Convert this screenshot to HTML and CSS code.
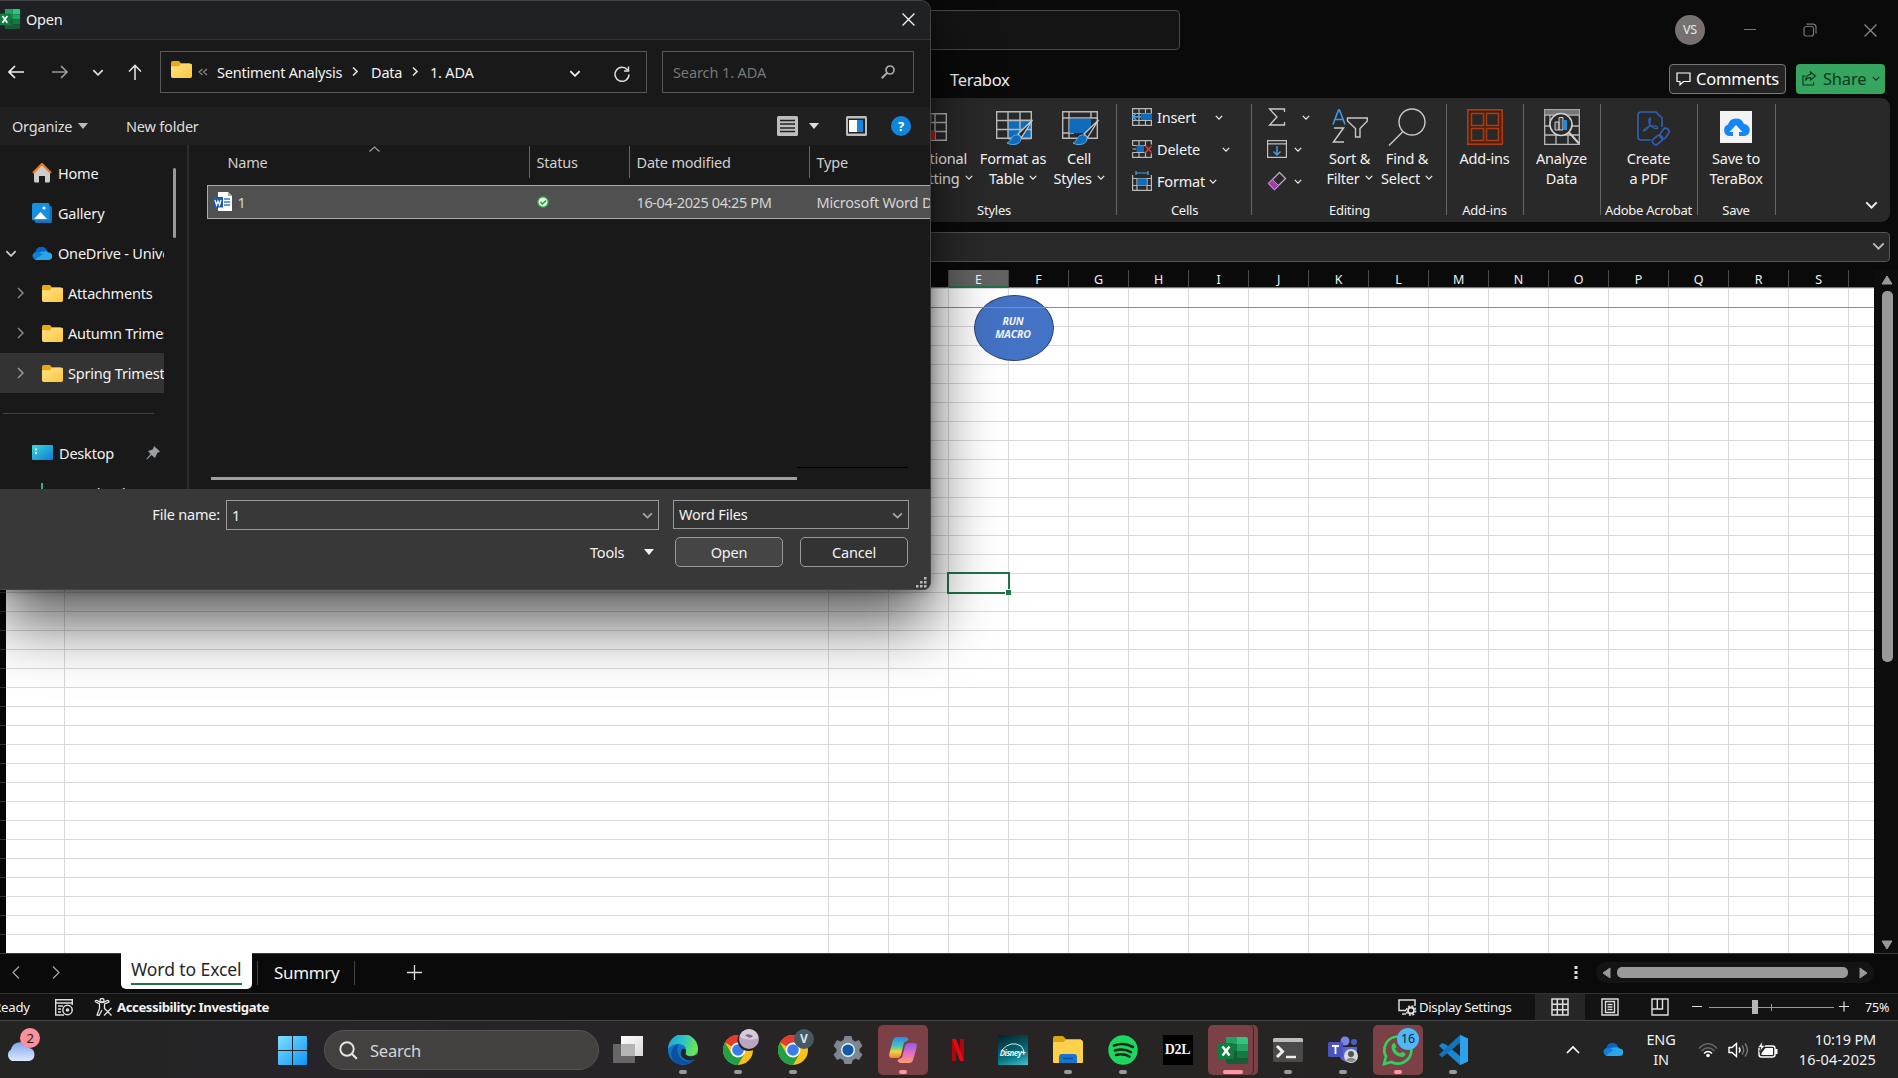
FILE: index.html
```html
<!DOCTYPE html>
<html lang="en">
<head>
<meta charset="utf-8">
<title>Excel - Open</title>
<link rel="stylesheet" href="styles.css">
</head>
<body>
<svg width="0" height="0" class="defs">
  <defs>
    <linearGradient id="gFolder" x1="0" y1="0" x2="1" y2="1"><stop offset="0" stop-color="#ffe08a"/><stop offset="1" stop-color="#ffc83a"/></linearGradient>
    <linearGradient id="gWin" x1="0" y1="0" x2="1" y2="1"><stop offset="0" stop-color="#7fe0ff"/><stop offset="1" stop-color="#0c95f5"/></linearGradient>
    <linearGradient id="gEdge" x1="0" y1="0" x2="1" y2="0.3"><stop offset="0" stop-color="#1c9fe0"/><stop offset=".55" stop-color="#2cc4c9"/><stop offset="1" stop-color="#6be554"/></linearGradient>
    <linearGradient id="gCloud" x1="0" y1="0" x2="0" y2="1"><stop offset="0" stop-color="#7ea6ee"/><stop offset="1" stop-color="#dde8fb"/></linearGradient>
    <linearGradient id="gCopA" x1="0" y1="0" x2="0" y2="1"><stop offset="0" stop-color="#2d86f0"/><stop offset=".45" stop-color="#4bc6b0"/><stop offset=".7" stop-color="#f3d33c"/><stop offset="1" stop-color="#f77f35"/></linearGradient>
    <linearGradient id="gCopB" x1="0" y1="0" x2="0" y2="1"><stop offset="0" stop-color="#8a5bea"/><stop offset=".5" stop-color="#e76cc6"/><stop offset="1" stop-color="#ff9c70"/></linearGradient>
    <linearGradient id="gDesk" x1="0" y1="0" x2="1" y2="1"><stop offset="0" stop-color="#35dbe0"/><stop offset="1" stop-color="#1277d4"/></linearGradient>
    <linearGradient id="gView" x1="0" y1="0" x2="1" y2="1"><stop offset="0" stop-color="#fff"/><stop offset="1" stop-color="#d8d8d8"/></linearGradient>

    <symbol id="chev" viewBox="0 0 10 6"><path d="M1 1l4 4 4-4" fill="none" stroke="currentColor" stroke-width="1.5"/></symbol>
    <symbol id="tri" viewBox="0 0 10 6"><path d="M0 0h10L5 6z" fill="currentColor"/></symbol>
    <symbol id="close" viewBox="0 0 12 12"><path d="M.5.5l11 11M11.500.5l-11 11" fill="none" stroke="currentColor" stroke-width="1.2"/></symbol>
    <symbol id="folder" viewBox="0 0 20 16"><path d="M0 1.500Q0 0 1.500 0h6L9.500 2H18v6H0z" fill="#e9a912"/><path d="M0 5h7.500L9.500 2.600H19Q20 2.600 20 3.800V14.500Q20 16 18.500 16h-17Q0 16 0 14.500z" fill="url(#gFolder)"/></symbol>
    <symbol id="excel" viewBox="0 0 30 27"><path d="M8 0h11v27H10Q8 27 8 25z" fill="#21a366"/><path d="M19 0h9q2 0 2 2v5H19z" fill="#33c481"/><path d="M8 7h11v7H8z" fill="#107c41"/><path d="M19 7h11v7H19z" fill="#21a366"/><path d="M8 14h11v7H8z" fill="#185c37"/><path d="M19 14h11v7H19z" fill="#107c41"/><path d="M8 21h22v4q0 2-2 2H10q-2 0-2-2z" fill="#185c37"/><rect x="0" y="6" width="16" height="16" rx="1.500" fill="#107c41"/><path d="M4.500 9.500l7 9M11.500 9.500l-7 9" stroke="#fff" stroke-width="2.500"/></symbol>
    <symbol id="cloud" viewBox="0 0 20 13"><path d="M4 12.500A4 4 0 013.500 5 6 6 0 0115 3.500L17 9 8 12.800z" fill="#0a64c8"/><path d="M2 11.500Q6 4 11 4.500q4-1 5.500 1A3.700 3.700 0 0116.500 13H5Q3 13 2 11.500z" fill="#28a8ea"/><path d="M.8 10A3.700 3.700 0 014 5q3-.5 6.500 2.300L3 12.500Q1.200 11.700.8 10z" fill="#0f80d8"/></symbol>
    <symbol id="sheet" viewBox="0 0 36 28"><path d="M.7.700h34.600v26.600H.7zM.7 9.500h34.600M.7 18.500h34.600M12 .7v26.600M24 .7v26.600" fill="none" stroke="#b9b9b9" stroke-width="1.400"/></symbol>
    <symbol id="brush" viewBox="0 0 28 26"><path d="M26.500 1L12 15l3.500 3.500z" fill="#292929" stroke="#c8c8c8" stroke-width="1.300"/><path d="M1 24q3-1 4-4 2-4.500 6.500-4 4 1 3.500 4.500Q14 25 8 25.500 4 26 1 24z" fill="#0f6cbd" stroke="#5aa9e6" stroke-width="1"/></symbol>
    <symbol id="chrome" viewBox="0 0 30 30"><circle cx="15" cy="15" r="15" fill="#fbc116"/><path d="M15 15L2 7.500A15 15 0 0128 7.500H15z" fill="#e33b2e"/><path d="M2 7.500A15 15 0 0015 30l6.500-11.200L15 15l-6.500 3.700z" fill="#21a047"/><circle cx="15" cy="15" r="7.400" fill="#fff"/><circle cx="15" cy="15" r="5.800" fill="#3b7ded"/></symbol>
  </defs>
</svg>

<div class="screen">
  <header class="titlebar">
    <div class="app-search"></div>
    <div class="window-tools">
      <span class="avatar">VS</span>
      <svg width="12" height="12" viewBox="0 0 12 12"><path d="M0 5.500h12" stroke="#777"/></svg>
      <svg width="14" height="14" viewBox="0 0 14 14"><g fill="none" stroke="#777" stroke-width="1.200"><rect x="1" y="3.500" width="9.500" height="9.500" rx="2"/><path d="M3.500 1.200H10q3 0 3 3V10.500"/></g></svg>
      <svg width="13" height="13" class="dim"><use href="#close"/></svg>
    </div>
  </header>

  <div class="tabs">
    <span class="tab">Terabox</span>
    <div class="tab-actions">
      <button class="comments"><svg width="15" height="14" viewBox="0 0 15 14"><path d="M1 1h13v8.500H7.500L4 12.800V9.500H1z" fill="none" stroke="#fff" stroke-width="1.200"/></svg>Comments</button>
      <button class="share"><svg width="15" height="15" viewBox="0 0 15 15"><path d="M3.500 5H1v9h10.500v-3M8.500 1l5 4-5 4V6.500Q5 6.500 3.500 9.500 4 4 8.500 3.500z" fill="none" stroke="#0b3a1d" stroke-width="1.200"/></svg>Share<svg width="8" height="5"><use href="#chev"/></svg></button>
    </div>
  </div>

  <section class="ribbon">
    <div class="group styles">
      <div class="tools">
        <div class="big w84"><svg width="36" height="36" viewBox="0 0 36 36"><use href="#sheet" y="4" width="36" height="28"/><path d="M12 5h9v8h-9zM12 22h12v9H12z" fill="#c4201d"/></svg><span>Conditional</span><span>Formatting <svg width="8" height="5"><use href="#chev"/></svg></span></div>
        <div class="big w84"><svg class="nudge" width="38" height="36" viewBox="0 0 38 36"><path d="M12 10h23v21H12z" fill="#0f6cbd"/><use href="#sheet" y="2" width="36" height="28"/><use href="#brush" x="10" y="10" width="28" height="26"/></svg><span>Format as</span><span>Table <svg width="8" height="5"><use href="#chev"/></svg></span></div>
        <div class="big w48"><svg class="nudge" width="38" height="36" viewBox="0 0 38 36"><path d="M.7 2.700h34.600v26.600H.7zM.7 9h34.600M7 2.700v26.600M29 2.700V9M.7 24H12" fill="none" stroke="#b9b9b9" stroke-width="1.400"/><path d="M7.700 9.700H29V24H7.700z" fill="#0f6cbd"/><use href="#brush" x="10" y="10" width="28" height="26"/></svg><span>Cell</span><span>Styles <svg width="8" height="5"><use href="#chev"/></svg></span></div>
      </div>
      <div class="label">Styles</div>
    </div>
    <div class="group cells">
      <div class="small-tools">
        <div class="small"><svg width="20" height="18" viewBox="0 0 20 18"><path d="M.6.600h18.800v16.800H.6zM.6 5.500h18.800M.6 12.500h18.800M7 .6v16.800M13.500.6v16.800" fill="none" stroke="#b9b9b9" stroke-width="1.200"/><path d="M9 5.500h11v6.500H9z" fill="#0f6cbd"/><path d="M9 8.800H1M4.500 5L.8 8.800l3.700 3.700" fill="none" stroke="#4aa3e8" stroke-width="1.500"/></svg><span>Insert</span><svg class="c1" width="8" height="5"><use href="#chev"/></svg></div>
        <div class="small"><svg width="20" height="18" viewBox="0 0 20 18"><path d="M.6 5.500V.6h18.800v4M.6 5.500h13M.6 12.500v4.900h18.800v-4M.6 12.500h12M7 .6v4.900M13.500.6v4.900M7 12.500v4.900M13.500 12.500v4.900M.6 9H4" fill="none" stroke="#b9b9b9" stroke-width="1.200"/><path d="M4.500 5.500h7.500v6.500H4.500z" fill="#0f6cbd"/><path d="M13.500 6l6 6.500M19.500 6l-6 6.500" stroke="#e0403a" stroke-width="1.500"/></svg><span>Delete</span><svg class="c2" width="8" height="5"><use href="#chev"/></svg></div>
        <div class="small"><svg width="20" height="20" viewBox="0 0 20 20"><path d="M.6 4v15.400h18.800V4M.6 7.500h18.800M.6 14.500h18.800M5 7v12.400M15 7v12.400" fill="none" stroke="#b9b9b9" stroke-width="1.200"/><path d="M5.500 7.500h9v7h-9z" fill="#0f6cbd"/><path d="M4 2h12M4 0v4M16 0v4" fill="none" stroke="#4aa3e8" stroke-width="1.200"/></svg><span>Format</span><svg class="c3" width="8" height="5"><use href="#chev"/></svg></div>
      </div>
      <div class="label">Cells</div>
    </div>
    <div class="group editing">
      <div class="tools">
        <div class="small-tools">
          <div class="small"><svg width="20" height="18" viewBox="0 0 20 18"><path d="M17.500 4V1H2.500L10 9l-7.500 8h15v-3" fill="none" stroke="#ccc" stroke-width="1.300"/></svg><svg class="s1" width="8" height="5"><use href="#chev"/></svg></div>
          <div class="small"><svg width="20" height="18" viewBox="0 0 20 18"><path d="M.6.600h18.800v16.800H.6zM.6 3.800h18.800" fill="none" stroke="#c0c0c0" stroke-width="1.200"/><path d="M10 6v9M6.500 11.500L10 15l3.500-3.500" fill="none" stroke="#4aa3e8" stroke-width="1.400"/></svg><svg class="s2" width="8" height="5"><use href="#chev"/></svg></div>
          <div class="small"><svg width="20" height="20" viewBox="0 0 20 20"><path d="M12.500 1.500l6 6L7.500 18.500l-6-6z" fill="none" stroke="#c9a0cf" stroke-width="1.300"/><path d="M5.500 8.500l6 6-4 4-6-6z" fill="#a23bab" stroke="#d583dd"/></svg><svg class="s2" width="8" height="5"><use href="#chev"/></svg></div>
        </div>
        <div class="big w59"><svg width="36" height="36" viewBox="0 0 36 36"><path d="M1 15.500L6.500 1h1L13 15.500M3 10.500h8" fill="none" stroke="#3f9be6" stroke-width="1.600"/><path d="M2 19h9.500L1.500 33H12" fill="none" stroke="#c8c8c8" stroke-width="1.500"/><path d="M15.500 9h19.800v3L28 19.500V28h-4.500v-8.500L15.500 12z" fill="none" stroke="#c8c8c8" stroke-width="1.400"/></svg><span>Sort &amp;</span><span>Filter <svg width="8" height="5"><use href="#chev"/></svg></span></div>
        <div class="big w56"><svg width="38" height="38" viewBox="0 0 38 38"><circle cx="24" cy="14" r="13" fill="none" stroke="#c8c8c8" stroke-width="1.400"/><path d="M15 23.500L1 37.500" stroke="#c8c8c8" stroke-width="1.400"/></svg><span>Find &amp;</span><span>Select <svg width="8" height="5"><use href="#chev"/></svg></span></div>
      </div>
      <div class="label">Editing</div>
    </div>
    <div class="group one w77">
      <div class="big"><svg width="36" height="36" viewBox="0 0 36 36"><rect x=".8" y=".8" width="34.400" height="34.400" fill="#47200f" stroke="#b03a12" stroke-width="1.600"/><g fill="#292929" stroke="#b03a12" stroke-width="1.500"><path d="M4.500 4.500h12v12h-12zM19.500 4.500h12v12h-12zM4.500 19.500h12v12h-12zM19.500 19.500h12v12h-12z"/></g></svg><span>Add-ins</span></div>
      <div class="label">Add-ins</div>
    </div>
    <div class="group one w77">
      <div class="big"><svg width="36" height="36" viewBox="0 0 36 36"><path d="M.7.700h34.600v34.600H.7zM.7 6h34.600M.7 17h34.600M.7 26h34.600M12 17v18M24 17v18M6 6v11" fill="none" stroke="#b9b9b9" stroke-width="1.300"/><path d="M.7.700h34.600V5H.7z" fill="#777"/><circle cx="17" cy="15.500" r="11" fill="#292929" stroke="#d0d0d0" stroke-width="1.600"/><path d="M25 23.500l10 11" stroke="#d0d0d0" stroke-width="2"/><path d="M11 13h4v8h-4zM15 8.500h4V21h-4z" fill="#444" stroke="#ccc"/><path d="M19 11h4v10h-4z" fill="#1e8ae0"/></svg><span>Analyze</span><span>Data</span></div>
      <div class="label"></div>
    </div>
    <div class="group one w97">
      <div class="big"><svg class="pdf" width="36" height="38" viewBox="0 0 36 38"><g fill="none" stroke="#2f62b8" stroke-width="1.600"><path d="M17 32H7q-3 0-3-3V7q0-3 3-3h15l6 6v9"/><path d="M9.500 23q7-2 7-13-3 0-1 6 3 5 8 4.500 1-3-6-2.500-7 1-8 5z" stroke-width="1.200"/><rect x="-5.500" y="-3.300" width="11" height="6.600" rx="3.300" transform="translate(30.500 25.500) rotate(-55)"/><rect x="-5.500" y="-3.300" width="11" height="6.600" rx="3.300" transform="translate(23.500 32) rotate(-40)"/></g></svg><span>Create</span><span>a PDF</span></div>
      <div class="label">Adobe Acrobat</div>
    </div>
    <div class="group one w78">
      <div class="big"><svg width="32" height="36" viewBox="0 0 32 36"><path d="M0 2h32v32H0z" fill="#f3f3f3"/><path d="M9 27A6 6 0 018 15.500 8.500 8.500 0 0124 15a6 6 0 01-.5 12H19v-4h3.500L16 16l-6.500 7H13v4z" fill="#1585f7"/></svg><span>Save to</span><span>TeraBox</span></div>
      <div class="label">Save</div>
    </div>
    <svg class="collapse" width="13" height="8"><use href="#chev"/></svg>
  </section>

  <div class="formula"><svg width="13" height="8"><use href="#chev"/></svg></div>

  <main class="workbook">
    <div class="sheet-area">
      <div class="col-heads">
        <span></span><span></span><span></span><span></span><span class="on">E</span><span>F</span><span>G</span><span>H</span><span>I</span><span>J</span><span>K</span><span>L</span><span>M</span><span>N</span><span>O</span><span>P</span><span>Q</span><span>R</span><span>S</span><span></span>
      </div>
      <div class="body-row">
        <div class="row-heads"></div>
        <div class="cells-grid">
          <div class="macro"><span>RUN</span><span>MACRO</span></div>
          <div class="freeze"></div>
          <div class="active-cell"></div>
        </div>
      </div>
    </div>
    <div class="vscroll">
      <svg width="12" height="10" viewBox="0 0 12 10"><path d="M6 1l5 8H1z" fill="#999" stroke="#999" stroke-linejoin="round"/></svg>
      <div class="thumb"></div>
      <svg width="12" height="10" viewBox="0 0 12 10"><path d="M6 9l5-8H1z" fill="#999" stroke="#999" stroke-linejoin="round"/></svg>
    </div>
  </main>

  <div class="sheet-tabs">
    <svg class="prev" width="8" height="13" viewBox="0 0 8 13"><path d="M7 .500l-6 6 6 6" fill="none" stroke="#aaa" stroke-width="1.200"/></svg>
    <svg class="next" width="8" height="13" viewBox="0 0 8 13"><path d="M1 .500l6 6-6 6" fill="none" stroke="#aaa" stroke-width="1.200"/></svg>
    <div class="sheet-active"><span>Word to Excel</span></div>
    <div class="sheet-other">Summry</div>
    <svg class="plus" width="15" height="15" viewBox="0 0 15 15"><path d="M7.500 0v15M0 7.500h15" stroke="#ddd" stroke-width="1.300"/></svg>
    <svg class="dots" width="4" height="14" viewBox="0 0 4 14"><path d="M.5 0h3v3h-3zM.5 5h3v3h-3zM.5 10h3v3h-3z" fill="#ddd"/></svg>
    <div class="hscroll">
      <svg width="9" height="12" viewBox="0 0 9 12"><path d="M8 1v10L1 6z" fill="#999" stroke="#999" stroke-linejoin="round"/></svg>
      <div class="thumb"></div>
      <svg width="9" height="12" viewBox="0 0 9 12"><path d="M1 1v10l7-5z" fill="#999" stroke="#999" stroke-linejoin="round"/></svg>
    </div>
  </div>

  <footer class="status">
    <span class="ready">Ready</span>
    <svg width="18" height="17" viewBox="0 0 18 17"><path d="M9 16H.7V.700h16.600V6M.7 4h16.600M3 7h5M3 10h3M3 13h3" fill="none" stroke="#ddd" stroke-width="1.400"/><circle cx="12.500" cy="11" r="4.700" fill="none" stroke="#ddd" stroke-width="1.500"/><circle cx="12.500" cy="11" r="1.800" fill="#ddd"/></svg>
    <svg class="acc-icon" width="19" height="18" viewBox="0 0 19 18"><g fill="none" stroke="#e5e5e5" stroke-width="1.300"><circle cx="8" cy="2.500" r="2"/><path d="M1 3.500l4.500 2.500v4.500L3 17l2 .5 3-5.500M1 3.500q.5-1.500 2-1l3 1.500h4l3.500-1.500q1.500 0 1.500 1.500L10.500 6v4M10 10l7.500 7.500M17.500 10L10 17.500"/></g></svg>
    <b>Accessibility: Investigate</b>
    <div class="display"><svg width="19" height="17" viewBox="0 0 19 17"><path d="M8 11.500H1V1h16v6M4 15h4" fill="none" stroke="#ddd" stroke-width="1.500"/><circle cx="13" cy="11.500" r="3" fill="none" stroke="#ddd" stroke-width="1.800"/><circle cx="13" cy="11.500" r="4.600" fill="none" stroke="#ddd" stroke-width="1.600" stroke-dasharray="2 1.600"/></svg>Display Settings</div>
    <div class="views">
      <div class="view on"><svg width="18" height="18" viewBox="0 0 18 18"><path d="M1 1h16v16H1zM1 6.300h16M1 11.700h16M6.300 1v16M11.700 1v16" fill="none" stroke="#ddd" stroke-width="1.500"/></svg></div>
      <div class="view"><svg width="18" height="18" viewBox="0 0 18 18"><path d="M1 1h16v16H1zM4.500 3.500h9v11h-9zM6.500 6.500h5M6.500 9h5M6.500 11.500h5" fill="none" stroke="#ddd" stroke-width="1.400"/></svg></div>
      <div class="view"><svg width="18" height="18" viewBox="0 0 18 18"><path d="M1 1h16v16H1zM6.300 1v10M1 11h10.500V1" fill="none" stroke="#ddd" stroke-width="1.400"/></svg></div>
    </div>
    <svg class="zoom" width="158" height="16" viewBox="0 0 158 16"><path d="M1 7.500h10M148 7.500h10M153 2.500v10" stroke="#ddd" stroke-width="1.200"/><path d="M18 8.500h125M80.500 5v7" stroke="#999"/><path d="M61 1h6v14h-6z" fill="#b5b5b5"/></svg>
    <span class="pct">75%</span>
  </footer>

  <footer class="taskbar">
    <div class="weather"><svg width="30" height="22" viewBox="0 0 30 22"><path d="M6 22A6.500 6.500 0 015 10.500 9.500 9.500 0 0123 9a6.600 6.600 0 010 13z" fill="url(#gCloud)"/></svg><span>2</span></div>
    <svg class="start" width="29" height="29" viewBox="0 0 29 29"><path d="M0 1q0-1 1-1h13v14H0zM15 0h13q1 0 1 1v13H15zM0 15h14v14H1q-1 0-1-1zM15 15h14v13q0 1-1 1H15z" fill="url(#gWin)"/></svg>
    <div class="search"><svg width="19" height="19" viewBox="0 0 19 19"><circle cx="8" cy="8" r="6.700" fill="none" stroke="#e5e5e5" stroke-width="1.900"/><path d="M12.800 12.800l5 5" stroke="#e5e5e5" stroke-width="2.200"/></svg>Search</div>
    <nav class="apps">
      <div class="app"><svg width="30" height="30" viewBox="0 0 30 30"><path d="M8 1h22v20H8z" fill="url(#gView)"/><path d="M0 9h22v19H0z" fill="#777" opacity=".8"/><path d="M8 9h14v12H8z" fill="#b4b4b4"/></svg></div>
      <div class="app run"><svg width="30" height="30" viewBox="0 0 30 30"><circle cx="15" cy="15" r="15" fill="#1273c4"/><path d="M0 14A15 15 0 0130 14q0 7-7.500 7-6 0-4.500-4.500Q19 10 11 9 3 9 0 14z" fill="url(#gEdge)"/><path d="M8.500 28.500Q1 23 4 15q2-5 7-6-3 4-1 10t9 7.500q4 .5 8-2Q19 32 8.500 28.500z" fill="#0d4fa0"/><path d="M18 16.500Q16 21 22.500 21.500q4 0 6-2L29 22l-2 2q-6 3.500-12-1-4-4-1-9 4-1 4 2.500z" fill="#28241f"/></svg></div>
      <div class="app run"><svg class="badged" width="38" height="38" viewBox="0 0 38 38"><use href="#chrome" x="4" y="4" width="30" height="30"/><circle cx="29.500" cy="9" r="11" fill="#272423"/><circle cx="30" cy="8" r="10" fill="#b9a6c4"/><path d="M20.500 6q9 5 19 1-1-8-9.500-9-8 1-9.500 8z" fill="#d9cadb"/><path d="M26 4q4-2 8 1-3 4-8-1z" fill="#7f6796"/></svg></div>
      <div class="app run"><svg class="badged" width="38" height="38" viewBox="0 0 38 38"><use href="#chrome" x="4" y="4" width="30" height="30"/><circle cx="30" cy="8" r="10" fill="#455a64"/></svg><em>V</em></div>
      <div class="app"><svg width="30" height="30" viewBox="0 0 30 30"><path d="M11.500 1h7l1 4 3 1.500 3.500-1.500 3.500 6-3 3v2.500l3 3-3.500 5.500-3.500-1.500-3 2-1 3.500h-7l-1-3.500-3-2-3.500 1.500L.5 19.500l3-3V14l-3-3L4 5l3.500 1.500 3-1.500z" fill="#7c8791"/><circle cx="15" cy="15" r="7" fill="#e6eef5"/><circle cx="15" cy="15" r="5.600" fill="#0f5ba3"/></svg></div>
      <div class="app run hot"><svg width="30" height="28" viewBox="0 0 30 28"><path d="M9 1h8q3 0 3.500 3L16 6.500 13 19q-1 3-4 3H4Q0 22 1.500 17L5 4q1-3 4-3z" fill="url(#gCopA)"/><path d="M21 27h-8q-3 0-3.500-3l4.500-2.500L17 10q1-3 4-3h5q4 0 2.500 5L25 24q-1 3-4 3z" fill="url(#gCopB)"/></svg></div>
      <div class="app"><svg width="14" height="22" viewBox="0 0 14 22"><path d="M1 0h4v22l-4 .5zM9 0h4v22.500L9 22z" fill="#b1060f"/><path d="M1 0h4l8 22.500-4-.5z" fill="#e50914"/></svg></div>
      <div class="app"><div class="disney">Disney+<svg width="24" height="12" viewBox="0 0 24 12"><path d="M1 7Q10-3 20 3q3 3 3 8" fill="none" stroke="#d6f2f4"/></svg></div></div>
      <div class="app run"><svg width="30" height="28" viewBox="0 0 30 28"><path d="M0 2q0-2 2-2h8l3 3h15v8H0z" fill="#d9a514"/><path d="M0 6h10l3-2h15q2 0 2 2v20q0 1-1 1H1q-1 0-1-1z" fill="#ffd04a"/><path d="M6 27v-6q0-3 3-3h12q3 0 3 3v6z" fill="#1774cf"/><path d="M10 22.500h10" stroke="#0c4f96" stroke-width="1.500"/></svg></div>
      <div class="app run"><svg width="30" height="30" viewBox="0 0 30 30"><circle cx="15" cy="15" r="14.700" fill="#1ed760"/><path d="M6 10.500q10-3.500 19 1.500M7 15.500q8.500-2.500 16 1.700M8 20q7-2 13.500 1.600" fill="none" stroke="#12271a" stroke-width="2.600" stroke-linecap="round"/></svg></div>
      <div class="app"><div class="d2l">D2L</div></div>
      <div class="app run hot wide"><svg width="30" height="27"><use href="#excel"/></svg></div>
      <div class="app run"><svg width="30" height="24" viewBox="0 0 30 24"><rect width="30" height="24" rx="1.500" fill="#4a4a4a"/><path d="M0 4V1.500Q0 0 1.500 0h27Q30 0 30 1.500V4z" fill="#bdbdbd"/><path d="M4 8l5.500 5.500L4 19" fill="none" stroke="#eee" stroke-width="3"/><path d="M13 19h10" stroke="#eee" stroke-width="2.500"/></svg></div>
      <div class="app run"><svg width="30" height="30" viewBox="0 0 30 30"><circle cx="17" cy="6" r="4.500" fill="#7b83eb"/><circle cx="26" cy="7" r="3" fill="#5059c9"/><path d="M11 12h18v8q0 7-9 7-7 0-9-7z" fill="#5b64d0"/><rect y="7" width="15" height="15" rx="1.500" fill="#4b53bc"/><path d="M4 11h7M7.500 11v8" stroke="#fff" stroke-width="1.800"/><circle cx="23" cy="21" r="7" fill="#d8d8d8"/><circle cx="23" cy="19" r="3" fill="#555"/><path d="M18 25q5-5 10 0-5 4-10 0z" fill="#888"/></svg></div>
      <div class="app run hot"><svg width="32" height="32" viewBox="0 0 32 32"><path d="M2 30l2-7.500A13.500 13.500 0 119.500 28z" fill="none" stroke="#2fd05f" stroke-width="2.700"/><path d="M10.500 10q2-2 3 .5l1 2.500-1.500 2q1.500 3 5 4.500l2-1.800 3.500 1.800q0 3.500-4 3.500-8-1-10-9 0-2.500 1-4z" fill="#2fd05f"/></svg><i>16</i></div>
      <div class="app run"><svg width="30" height="30" viewBox="0 0 30 30"><path d="M22 0l8 3.500v23L22 30 1 11l3-3 4 1.500L22 21z" fill="#1b86cf"/><path d="M22 0v8L4 22.500 1 19.500z" fill="#1273b8"/><path d="M22 0l8 3.500v23L22 30z" fill="#2ba2ee"/></svg></div>
    </nav>
    <div class="tray">
      <svg class="up" width="14" height="9" viewBox="0 0 14 9"><path d="M1 8l6-6 6 6" fill="none" stroke="#fff" stroke-width="1.700"/></svg>
      <svg class="od" width="20" height="13"><use href="#cloud"/></svg>
      <div class="lang"><span>ENG</span><span>IN</span></div>
      <svg class="wifi" width="20" height="16" viewBox="0 0 20 16"><g fill="none" stroke-width="1.500"><path d="M1 6.500Q10-3 19 6.500M3.500 9q6.500-6.500 13 0" stroke="#666"/><path d="M6 11.500q4-4 8 0" stroke="#fff"/></g><circle cx="10" cy="13.500" r="1.800" fill="#fff"/></svg>
      <svg class="vol" width="21" height="16" viewBox="0 0 21 16"><path d="M1 5.500h3L8.500 1.500v13L4 10.500H1z" fill="none" stroke="#fff" stroke-width="1.400"/><path d="M11 5.500q2 2.500 0 5" fill="none" stroke="#fff" stroke-width="1.400"/><path d="M14 3.500q3.500 4.500 0 9M17 1.500q5 6.500 0 13" fill="none" stroke="#777" stroke-width="1.400"/></svg>
      <svg class="bat" width="21" height="17" viewBox="0 0 21 17"><rect x="2" y="5" width="16" height="11" rx="2.500" fill="none" stroke="#fff" stroke-width="1.400"/><path d="M4.500 12l4-5H16v7H4.500z" fill="#fff"/><path d="M18 8h2.500v5H18z" fill="#fff"/><path d="M5.500 0L1 6.500h3L2.500 11 8 4.500H5z" fill="#fff" stroke="#272727" stroke-width=".7"/></svg>
      <div class="clock"><span>10:19 PM</span><span class="date">16-04-2025</span></div>
    </div>
  </footer>

  <section class="dialog">
    <div class="d-title"><svg width="21" height="20" viewBox="1 0 30 27" preserveAspectRatio="none"><use href="#excel" width="30" height="27"/></svg><span>Open</span><svg class="x" width="13" height="13"><use href="#close"/></svg></div>
    <div class="d-nav">
      <svg width="16" height="14" viewBox="0 0 16 14"><path d="M16 7H1.500M7 1L1 7l6 6" fill="none" stroke="#eee" stroke-width="1.700"/></svg>
      <svg class="fwd" width="16" height="14" viewBox="0 0 16 14"><path d="M0 7h14.500M9 1l6 6-6 6" fill="none" stroke="#999" stroke-width="1.700"/></svg>
      <svg class="down" width="12" height="7" ><use href="#chev"/></svg>
      <svg class="upa" width="14" height="16" viewBox="0 0 14 16"><path d="M7 16V1.500M1 7.500l6-6 6 6" fill="none" stroke="#ddd" stroke-width="1.600"/></svg>
      <div class="address">
        <svg class="afold" width="21" height="17"><use href="#folder"/></svg>
        <svg class="dbl" width="10" height="8" viewBox="0 0 10 8"><path d="M4.500 1L1 4l3.500 3M9 1L5.500 4 9 7" fill="none" stroke="#888" stroke-width="1.200"/></svg>
        <span class="crumb1">Sentiment Analysis</span>
        <svg class="sep" width="6" height="9" viewBox="0 0 6 9"><path d="M1 .500l4 4-4 4" fill="none" stroke="#ddd" stroke-width="1.600"/></svg>
        <span class="crumb2">Data</span>
        <svg class="sep" width="6" height="9" viewBox="0 0 6 9"><path d="M1 .500l4 4-4 4" fill="none" stroke="#ddd" stroke-width="1.600"/></svg>
        <span>1. ADA</span>
        <svg class="ac" width="12" height="7"><use href="#chev"/></svg>
        <svg class="refresh" width="16" height="16" viewBox="0 0 16 16"><path d="M13.500 4A7 7 0 1015 8.500M14.500.5v4.500H10" fill="none" stroke="#ddd" stroke-width="1.500"/></svg>
      </div>
      <div class="d-search"><span>Search 1. ADA</span><svg width="14" height="14" viewBox="0 0 14 14"><circle cx="9" cy="5" r="4" fill="none" stroke="#aaa" stroke-width="1.700"/><path d="M6 8L.7 13.300" stroke="#aaa" stroke-width="2"/></svg></div>
    </div>
    <div class="d-tools">
      <span>Organize</span><svg class="t1" width="10" height="6"><use href="#tri"/></svg>
      <span class="nf">New folder</span>
      <svg class="list" width="21" height="20" viewBox="0 0 21 20"><rect width="21" height="20" rx="1.500" fill="#bdbdbd"/><path d="M3 4.500h15M3 8h15M3 12h15M3 15.500h15" stroke="#222" stroke-width="1.400"/></svg>
      <svg class="t2" width="10" height="6"><use href="#tri"/></svg>
      <svg class="pane" width="21" height="20" viewBox="0 0 21 20"><rect width="21" height="20" rx="1.500" fill="#bdbdbd"/><path d="M2 2.500h17v15H2z" fill="#222"/><path d="M3 4h8v12H3z" fill="#fff"/><path d="M11 4h6v12h-6z" fill="#1587dc"/></svg>
      <span class="help">?</span>
    </div>
    <div class="d-body">
      <aside class="side">
        <div class="side-list">
          <div class="item"><svg width="20" height="20" viewBox="0 0 20 20"><path d="M2 9l8-8 8 8v9q0 1.500-1.500 1.500h-3.500V13H7v6.500H3.500Q2 19.500 2 18z" fill="#ccc"/><path d="M1 10l9-9 9 9" fill="none" stroke="#e87b26" stroke-width="2.200"/></svg><span>Home</span></div>
          <div class="item"><svg width="20" height="20" viewBox="0 0 20 20"><rect x="3" y="3" width="17" height="17" rx="1.500" fill="#1b6fb8"/><rect width="17.500" height="17.500" rx="1.500" fill="#1590e3"/><path d="M2 16l6.500-7 6.500 7z" fill="#fff"/><circle cx="12" cy="5" r="1.600" fill="#fff"/></svg><span>Gallery</span></div>
          <div class="item"><svg class="tw open" width="12" height="7"><use href="#chev"/></svg><svg width="20" height="13"><use href="#cloud"/></svg><span>OneDrive - University</span></div>
          <div class="item sub"><svg class="tw" width="7" height="12" viewBox="0 0 7 12"><path d="M1 1l5 5-5 5" fill="none" stroke="#888" stroke-width="1.500"/></svg><svg width="21" height="17"><use href="#folder"/></svg><span>Attachments</span></div>
          <div class="item sub"><svg class="tw" width="7" height="12" viewBox="0 0 7 12"><path d="M1 1l5 5-5 5" fill="none" stroke="#888" stroke-width="1.500"/></svg><svg width="21" height="17"><use href="#folder"/></svg><span>Autumn Trimester</span></div>
          <div class="item sub sel"><svg class="tw" width="7" height="12" viewBox="0 0 7 12"><path d="M1 1l5 5-5 5" fill="none" stroke="#999" stroke-width="1.500"/></svg><svg width="21" height="17"><use href="#folder"/></svg><span>Spring Trimester</span></div>
          <div class="rule"></div>
          <div class="item"><svg width="21" height="16" viewBox="0 0 21 16"><rect width="21" height="15" rx="1" fill="url(#gDesk)"/><path d="M3 3.500h2v2H3zM3 7h2v2H3z" fill="#fff"/></svg><span>Desktop</span><svg class="pin" width="14" height="14" viewBox="0 0 14 14"><path d="M8 0l6 5.500-2 1-1 1L9 12 5.500 9 1 13.500.300 13 4.500 8 2 5l4.500-1.500L7.500 2z" fill="#9a9fa3"/></svg></div>
          <div class="item"><svg width="20" height="20" viewBox="0 0 20 20"><path d="M10 0v13M5 8l5 5 5-5" fill="none" stroke="#2fae82" stroke-width="2"/></svg><span>Downloads</span></div>
        </div>
        <div class="side-thumb"></div>
      </aside>
      <div class="files">
        <svg class="sort" width="11" height="6" viewBox="0 0 10 6"><path d="M0 5.500l5-4.500 5 4.500" fill="none" stroke="#999" stroke-width="1.300"/></svg>
        <div class="f-head"><span>Name</span><span>Status</span><span>Date modified</span><span>Type</span></div>
        <div class="f-row">
          <span class="fname"><svg width="19" height="20" viewBox="0 0 19 20"><path d="M5 0h10l4 4v15H5z" fill="#fff"/><path d="M15 0v4h4z" fill="#aaa"/><path d="M11 7h6M11 10h6M11 13h6" stroke="#3a78d0" stroke-width="1.300"/><rect y="5" width="10" height="10.500" fill="#1c57b8"/><path d="M2 8l1.500 5L5 9l1.500 4L8 8" fill="none" stroke="#fff" stroke-width="1.300"/></svg>1</span>
          <span><svg width="12" height="12" viewBox="0 0 12 12"><circle cx="6" cy="6" r="5.300" fill="#dff0df" stroke="#2f9a46" stroke-width="1.400"/><path d="M3.500 6l2 2 3.500-3.500" fill="none" stroke="#2f8a42" stroke-width="1.300"/></svg></span>
          <span class="when">16-04-2025 04:25 PM</span><span>Microsoft Word Document</span>
        </div>
        <div class="f-scroll"><div class="bar"></div><div class="shade"></div></div>
      </div>
    </div>
    <div class="d-foot">
      <div class="line">
        <label>File name:</label>
        <div class="input name"><span>1</span><svg width="11" height="7"><use href="#chev"/></svg></div>
        <div class="input type"><span>Word Files</span><svg width="11" height="7"><use href="#chev"/></svg></div>
      </div>
      <div class="line two">
        <span class="tl">Tools</span><svg class="t3" width="10" height="6"><use href="#tri"/></svg>
        <button class="btn ok">Open</button><button class="btn">Cancel</button>
      </div>
      <svg class="grip" width="13" height="12" viewBox="0 0 13 12"><path d="M9 0h2.500v2.500H9zM9 4h2.500v2.500H9zM5 4h2.500v2.500H5zM9 8h2.500v2.500H9zM5 8h2.500v2.500H5zM1 8h2.500v2.500H1z" fill="#bbb"/></svg>
    </div>
  </section>
</div>
</body>
</html>
```
FILE: styles.css
```css
* { box-sizing: border-box; }
body { margin: 0; background: #0a0a0a; font-family: "Noto Sans", "Open Sans", sans-serif; font-size: 14.5px; letter-spacing: -0.2px; color: #f2f2f2; }
svg { display: block; flex: none; }
button { font: inherit; letter-spacing: inherit; color: inherit; margin: 0; padding: 0; }
.defs { position: absolute; }
.screen { position: relative; width: 1898px; height: 1078px; overflow: hidden; display: flex; flex-direction: column; }
.screen > * { flex: none; }

/* Excel title bar and tabs */
.titlebar { height: 60px; display: flex; justify-content: space-between; padding-top: 10px; }
.app-search { width: 1180px; height: 40px; background: #141414; border: 1px solid #484848; border-radius: 4px; }
.window-tools { display: flex; align-items: center; height: 40px; padding-right: 21px; }
.window-tools svg:nth-of-type(1) { margin-left: 39px; }
.window-tools svg:nth-of-type(2) { margin-left: 47px; }
.window-tools svg:nth-of-type(3) { margin-left: 47px; }
.avatar { width: 30px; height: 30px; border-radius: 50%; background: #777071; color: #e8e8e8; font-size: 12.500px; line-height: 30px; text-align: center; }
.dim { color: #888; }
.tabs { height: 38px; display: flex; justify-content: space-between; padding: 4px 13px 0 950px; }
.tab { font-size: 16.500px; line-height: 32px; letter-spacing: -.3px; }
.tab-actions { display: flex; gap: 10px; }
.tab-actions button { height: 30px; border-radius: 4px; display: flex; align-items: center; font-size: 16.500px; letter-spacing: -.2px; padding-bottom: 1px; }
.comments { width: 117px; gap: 5px; padding-left: 6px; background: #242424; border: 1px solid #777; color: #fff; }
.share { width: 89px; gap: 6px; padding-left: 6px; background: #35a55f; border: 0; color: #0b3a1d; }

/* Ribbon */
.ribbon { height: 124px; width: 1890px; background: #292929; border-radius: 0 9px 9px 0; display: flex; position: relative; }
.group { position: relative; display: flex; flex-direction: column; justify-content: space-between; padding-top: 10px; }
.group::after { content: ""; position: absolute; right: 0; top: 6px; height: 111px; width: 1px; background: #666; }
.tools { display: flex; }
.label { height: 23px; line-height: 23px; font-size: 13px; letter-spacing: -.25px; text-align: center; white-space: nowrap; }
.big { display: flex; flex-direction: column; align-items: center; white-space: nowrap; line-height: 20px; }
.big > svg { height: 38px; margin-bottom: 2px; }
.big > span { display: flex; gap: 5px; align-items: center; }
.big span svg { margin-bottom: 1px; }
.big .nudge { margin-left: 3px; }
.big .pdf { margin-left: 6px; }
.one { padding-right: 2px; }
.w84 { width: 84px; } .w59 { width: 59px; } .w56 { width: 56px; }
.w48 { width: 48px; }
.styles { width: 1117px; padding-left: 887px; }
.styles .label { width: 214px; }
.cells { width: 135px; }
.editing { width: 195px; }
.small-tools { padding: 2px 0 0 15px; }
.editing .small-tools { width: 68px; padding-top: 0; margin-top: -7px; }
.cells .small-tools { margin-top: -7px; padding-top: 0; }
.small { height: 32px; display: flex; align-items: center; gap: 5px; }
.c1 { margin-left: 14px; } .c2 { margin-left: 17px; } .c3 { margin-left: -1px; }
.s1 { margin-left: 10px; } .s2 { margin-left: 2px; }
.w77 { width: 77px; } .w97 { width: 97px; } .w78 { width: 78px; }
.collapse { margin: 103px 0 0 89px; }

/* Formula bar */
.formula { height: 30px; width: 1890px; margin: 10px 0 8px; background: #292929; border: 1px solid #555; border-radius: 4px; display: flex; justify-content: flex-end; align-items: center; padding: 0 4px 2px 0; color: #bbb; }

/* Sheet */
.workbook { height: 683px; display: flex; }
.sheet-area { width: 1874px; overflow: hidden; }
.col-heads { height: 18px; display: grid; grid-template-columns: 65px 764px 60px 60px repeat(15, 60px) 26px; grid-template-rows: 17px; border-bottom: 1px solid #777; }
.col-heads span { border-right: 1px solid #4a4a4a; text-align: center; font-size: 12.500px; line-height: 19px; height: 17px; }
.col-heads .on { height: 18px; background: #636363; border-bottom: 2px solid #217346; }
.body-row { display: flex; height: 665px; }
.row-heads { width: 6px; background: linear-gradient(#060606 18px, #333 18px) 0 1px / 6px 19px; }
.cells-grid { position: relative; width: 1868px; background-color: #fff; background-image: linear-gradient(#d9d9d9, #d9d9d9), linear-gradient(#d9d9d9, #d9d9d9), linear-gradient(90deg, #d9d9d9 1px, transparent 1px), linear-gradient(transparent 18px, #d9d9d9 18px); background-size: 1px 100%, 1px 100%, 60px 100%, 100% 19px; background-position: 58px 0, 822px 0, 882px 0, 0 1px; background-repeat: no-repeat, no-repeat, repeat-x, repeat-y; }
.cells-grid::before { content: ""; position: absolute; left: 59px; top: 0; width: 763px; height: 100%; background: linear-gradient(transparent 18px, #d9d9d9 18px) 0 1px / 100% 19px, #fff; }
.cells-grid::after { content: ""; position: absolute; left: 0; top: 0; width: 58px; height: 100%; background: linear-gradient(transparent 18px, #d9d9d9 18px) 0 1px / 100% 19px, #fff; }
.macro { position: absolute; left: 968px; top: 7px; width: 80px; height: 66px; border: 1px solid #2a4478; border-radius: 50%; background: #4472c4; display: flex; flex-direction: column; align-items: center; justify-content: center; padding-right: 2px; font: italic bold 10.500px/13px "Open Sans", sans-serif; letter-spacing: -.2px; }
.freeze { position: absolute; left: 0; top: 19px; width: 100%; height: 1px; background: #8c8c8c; }
.active-cell { position: absolute; left: 941px; top: 284px; width: 63px; height: 22px; border: 2px solid #217346; }
.active-cell::after { content: ""; position: absolute; right: -3px; bottom: -3px; width: 5px; height: 5px; background: #217346; border: 1px solid #fff; border-width: 1px 0 0 1px; box-sizing: content-box; }
.vscroll { width: 24px; padding: 5px 1px 0 3px; display: flex; flex-direction: column; align-items: center; background: #0d0d0d; }
.vscroll .thumb { width: 11px; height: 371px; margin: 6px 0 278px; border-radius: 5px; background: #999; }

/* Sheet tabs */
.sheet-tabs { height: 40px; display: flex; align-items: center; border-top: 1px solid #3a3a3a; padding-bottom: 2px; }
.prev { margin-left: 12px; } .next { margin-left: 32px; }
.sheet-active { align-self: flex-start; margin: -1px 0 0 61px; width: 131px; height: 36px; background: #fff; border-radius: 0 0 5px 5px; padding-left: 10px; color: #262626; }
.sheet-active span { display: block; width: 111px; height: 32px; border-bottom: 2px solid #217346; font-size: 17.500px; line-height: 32px; letter-spacing: -.08px; white-space: nowrap; }
.sheet-other { margin-left: 5px; width: 98px; height: 24px; border: solid #444; border-width: 0 1px; padding-left: 16px; font-size: 17px; line-height: 24px; letter-spacing: -.35px; }
.plus { margin-left: 52px; }
.dots { margin-left: 1152px; }
.hscroll { width: 278px; height: 21px; margin-left: 18px; border-radius: 10px; background: #141414; display: flex; align-items: center; padding: 0 6px; }
.hscroll .thumb { width: 231px; height: 11px; margin: 0 11px 0 6px; border-radius: 5px; background: #999; }

/* Status bar */
.status { height: 27px; display: flex; align-items: center; background: #131313; border-top: 1px solid #333; font-size: 13.200px; white-space: nowrap; }
.ready { margin-left: -7px; width: 62px; }
.acc-icon { margin: 0 4px 0 21px; }
.status b { width: 1281px; letter-spacing: -.45px; }
.display { width: 137px; display: flex; align-items: center; gap: 2px; letter-spacing: -.38px; }
.views { display: flex; height: 100%; }
.view { width: 50px; display: flex; align-items: center; justify-content: center; }
.view.on { background: #262626; }
.zoom { margin-left: 6px; }
.pct { margin-left: 16px; font-size: 12.500px; }

/* Windows taskbar */
.taskbar { height: 58px; display: flex; align-items: center; background: linear-gradient(90deg, #242422, #27242a 20%, #282423 50%, #242424 80%); border-top: 1px solid #454545; }
.weather { position: relative; margin-left: 6px; }
.weather span { position: absolute; left: 14px; top: -11px; width: 20px; height: 20px; border-radius: 50%; background: #ff8f9a; color: #222; font-size: 13px; line-height: 20px; text-align: center; }
.start { margin-left: 242px; margin-top: 2px; }
.search { width: 275px; height: 40px; margin: 1px 0 0 17px; border-radius: 20px; background: #424140; border: 1px solid #545454; display: flex; align-items: center; gap: 12px; padding-left: 14px; font-size: 16.500px; color: #d5d5d5; }
.apps { display: flex; margin-left: 1px; height: 100%; }
.app { position: relative; width: 55px; display: flex; align-items: center; justify-content: center; padding-top: 1px; }
.app.run::after { content: ""; position: absolute; left: 24px; top: 49px; width: 8px; height: 4px; border-radius: 2px; background: #9a9a9a; }
.app.hot::before { content: ""; position: absolute; left: 3px; top: 4px; width: 50px; height: 50px; border-radius: 5px; background: #7b4147; }
.app.hot::after { background: #ff96a3; }
.app.wide::after { left: 18px; width: 20px; }
.app.wide::before { width: 45px; box-shadow: 1px 0 #3a2527, 5px 0 #7b4147; }
.app svg { position: relative; }
.badged { overflow: visible; }
.app em { position: absolute; left: 29px; top: 8px; width: 20px; text-align: center; font: bold 12px/20px "Open Sans", sans-serif; letter-spacing: 0; color: #dde3e6; }
.app i { position: absolute; left: 27px; top: 7px; width: 22px; height: 22px; border-radius: 50%; background: #4cb8fa; color: #10222e; font-style: normal; font-size: 12.500px; line-height: 22px; text-align: center; }
.disney { position: relative; width: 30px; height: 30px; background: linear-gradient(160deg, #06202a, #087482 65%, #3fc5c9); font: italic bold 8px/36px "Open Sans", sans-serif; letter-spacing: -.6px; text-align: center; }
.disney svg { position: absolute; left: 3px; top: 8px; }
.d2l { width: 30px; height: 30px; background: #000; font: bold 14px/30px "Liberation Serif", serif; letter-spacing: -.3px; text-align: center; }
.tray { display: flex; align-items: center; margin-left: 86px; }
.lang, .clock { display: flex; flex-direction: column; line-height: 20px; }
.lang { width: 40px; margin-left: 18px; align-items: center; }
.od { margin-left: 23px; }
.wifi { margin-left: 17px; } .vol { margin-left: 10px; } .bat { margin-left: 8px; }
.clock { width: 98px; align-items: flex-end; }
.date { letter-spacing: .15px; }
.lang span, .clock span { position: relative; top: -1px; }

/* Open dialog */
.dialog { position: absolute; left: 0; top: 0; width: 930.500px; height: 590px; display: flex; flex-direction: column; border: solid #454545; border-width: 1px 1px 1px 0; border-radius: 0 10px 8px 0; overflow: hidden; background: #191919; box-shadow: 0 32px 64px rgba(0, 0, 0, .66), 0 0 12px rgba(0, 0, 0, .3); }
.d-title { height: 39px; display: flex; align-items: center; padding-bottom: 2px; background: #202124; border-bottom: 1px solid #353535; }
.d-title span { margin-left: 5px; width: 876px; }
.d-nav { height: 67px; display: flex; align-items: center; padding: 0 0 3px 8px; }
.fwd { margin-left: 28px; } .down { margin-left: 24px; color: #ddd; } .upa { margin-left: 24px; }
.address { width: 487px; height: 42px; margin-left: 18px; border: 1px solid #585858; display: flex; align-items: center; padding: 0 0 1px 10px; white-space: nowrap; }
.afold { position: relative; top: -2px; }
.dbl { margin-left: 6px; }
.crumb1 { margin-left: 9px; width: 135px; }
.crumb2 { margin-left: 13px; width: 41px; }
.sep + span:not(.crumb2) { margin-left: 12px; }
.ac { position: relative; top: 2px; margin-left: auto; } .refresh { position: relative; top: 2px; margin: 0 16px 0 33px; }
.d-search { width: 252px; height: 42px; margin-left: 15px; border: 1px solid #585858; display: flex; justify-content: space-between; align-items: center; padding: 0 18px 1px 10px; color: #777; }
.d-search span { letter-spacing: -.1px; }
.d-tools { height: 38px; background: #202020; display: flex; align-items: center; padding-left: 12px; color: #ddd; }
.t1 { margin-left: 6px; width: 10px; color: #bbb; }
.d-tools > span:first-child { width: 60px; }
.nf { margin-left: 38px; width: 651px; }
.t2 { margin-left: 11px; } .pane { margin-left: 27px; }
.help { margin-left: 24px; width: 20px; height: 20px; border-radius: 50%; background: #0f86dd; color: #fff; font-weight: 700; font-size: 13px; line-height: 20px; text-align: center; }
.d-body { height: 344px; display: flex; }
.side { width: 189px; display: flex; border-right: 2px solid #2c2c2c; }
.side-list { width: 164px; padding-top: 8px; overflow: hidden; }
.item { height: 40px; display: flex; align-items: center; padding-left: 32px; position: relative; white-space: nowrap; }
.item span { margin-left: 6px; }
.item.sub { padding-left: 42px; }
.item.sub span { margin-left: 5px; }
.item.sel { background: #333; }
.tw { position: absolute; left: 17px; color: #ccc; }
.tw.open { left: 5px; }
.rule { height: 1px; margin: 20px 10px 19px 3px; background: #404040; }
.pin { position: absolute; left: 146px; }
.side-thumb { width: 3px; height: 70px; margin: 23px 0 0 9px; border-radius: 2px; background: #999; }
.files { position: relative; width: 741px; padding-top: 1px; }
.f-head, .f-row { display: grid; grid-template-columns: 322px 100px 180px 1fr; align-items: center; white-space: nowrap; }
.f-head { margin-left: 18px; height: 32px; color: #d0d0d0; }
.f-head span { height: 32px; padding-left: 7px; line-height: 32px; border-left: 1px solid #666; }
.f-head span:first-child { border: 0; padding-left: 21px; }
.sort { position: absolute; left: 180px; top: 1px; }
.f-row { margin: 7px 0 0 18px; height: 34px; background: #505050; border: 1px solid #aaa; border-right: 0; color: #d5d5d5; grid-template-columns: 321px 100px 180px 1fr; }
.f-row > span { padding-left: 8px; margin-top: -1px; }
.f-row .fname { padding-left: 5px; display: flex; gap: 6px; }
.f-row .when { letter-spacing: -.38px; }
.f-scroll { display: flex; height: 22px; margin: 246px 0 0 22px; padding-top: 1px; align-items: flex-start; }
.bar { width: 586px; height: 3px; margin-top: 11px; background: #a0a0a0; }
.shade { width: 111px; height: 1px; margin-top: 1px; background: #000; }
.d-foot { position: relative; flex: 1; background: #383838; padding-top: 11px; }
.line { display: flex; height: 30px; align-items: center; }
.line label { width: 220px; text-align: right; margin: -2px 6px 0 0; }
.input { height: 30px; border: 1px solid #999; display: flex; align-items: center; justify-content: space-between; padding: 0 5px 1px 5px; background: #383838; }
.input svg { color: #aaa; position: relative; top: 1px; }
.name { width: 433px; }
.type { width: 236px; margin: -1px 0 0 14px; height: 29px; background: #333; }
.two { margin-top: 7px; }
.tl { width: 54px; margin-left: 590px; }
.btn { width: 108px; height: 30px; border: 1px solid #999; border-radius: 5px; background: #333; margin-left: 17px; }
.btn.ok { background: #454545; margin-left: 21px; }
.grip { position: absolute; right: 2px; bottom: 0; }
```
